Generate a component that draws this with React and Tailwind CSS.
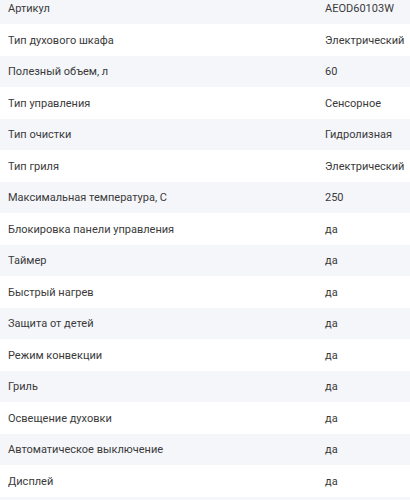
import React from 'react';

const rows = [
  ['Артикул', 'AEOD60103W'],
  ['Тип духового шкафа', 'Электрический'],
  ['Полезный объем, л', '60'],
  ['Тип управления', 'Сенсорное'],
  ['Тип очистки', 'Гидролизная'],
  ['Тип гриля', 'Электрический'],
  ['Максимальная температура, С', '250'],
  ['Блокировка панели управления', 'да'],
  ['Таймер', 'да'],
  ['Быстрый нагрев', 'да'],
  ['Защита от детей', 'да'],
  ['Режим конвекции', 'да'],
  ['Гриль', 'да'],
  ['Освещение духовки', 'да'],
  ['Автоматическое выключение', 'да'],
  ['Дисплей', 'да'],
];

export default function App() {
  return (
    <div className="w-[410px] h-[500px] overflow-hidden bg-white">
      <div className="-mt-[7.5px] text-[11px] text-[#3a3a3a]" style={{ fontFamily: 'Roboto, "Noto Sans", sans-serif' }}>
        {rows.map(([name, value], i) => (
          <div key={name} className={`flex items-center h-[31.5px] px-2 pt-[2px] ${i % 2 === 0 ? 'bg-[#f5f6fa]' : 'bg-white'}`}>
            <div className="w-[317px] shrink-0 truncate">{name}</div>
            <div className="whitespace-nowrap">{value}</div>
          </div>
        ))}
        <div className="h-[31.5px] bg-[#f5f6fa]"></div>
      </div>
    </div>
  );
}
